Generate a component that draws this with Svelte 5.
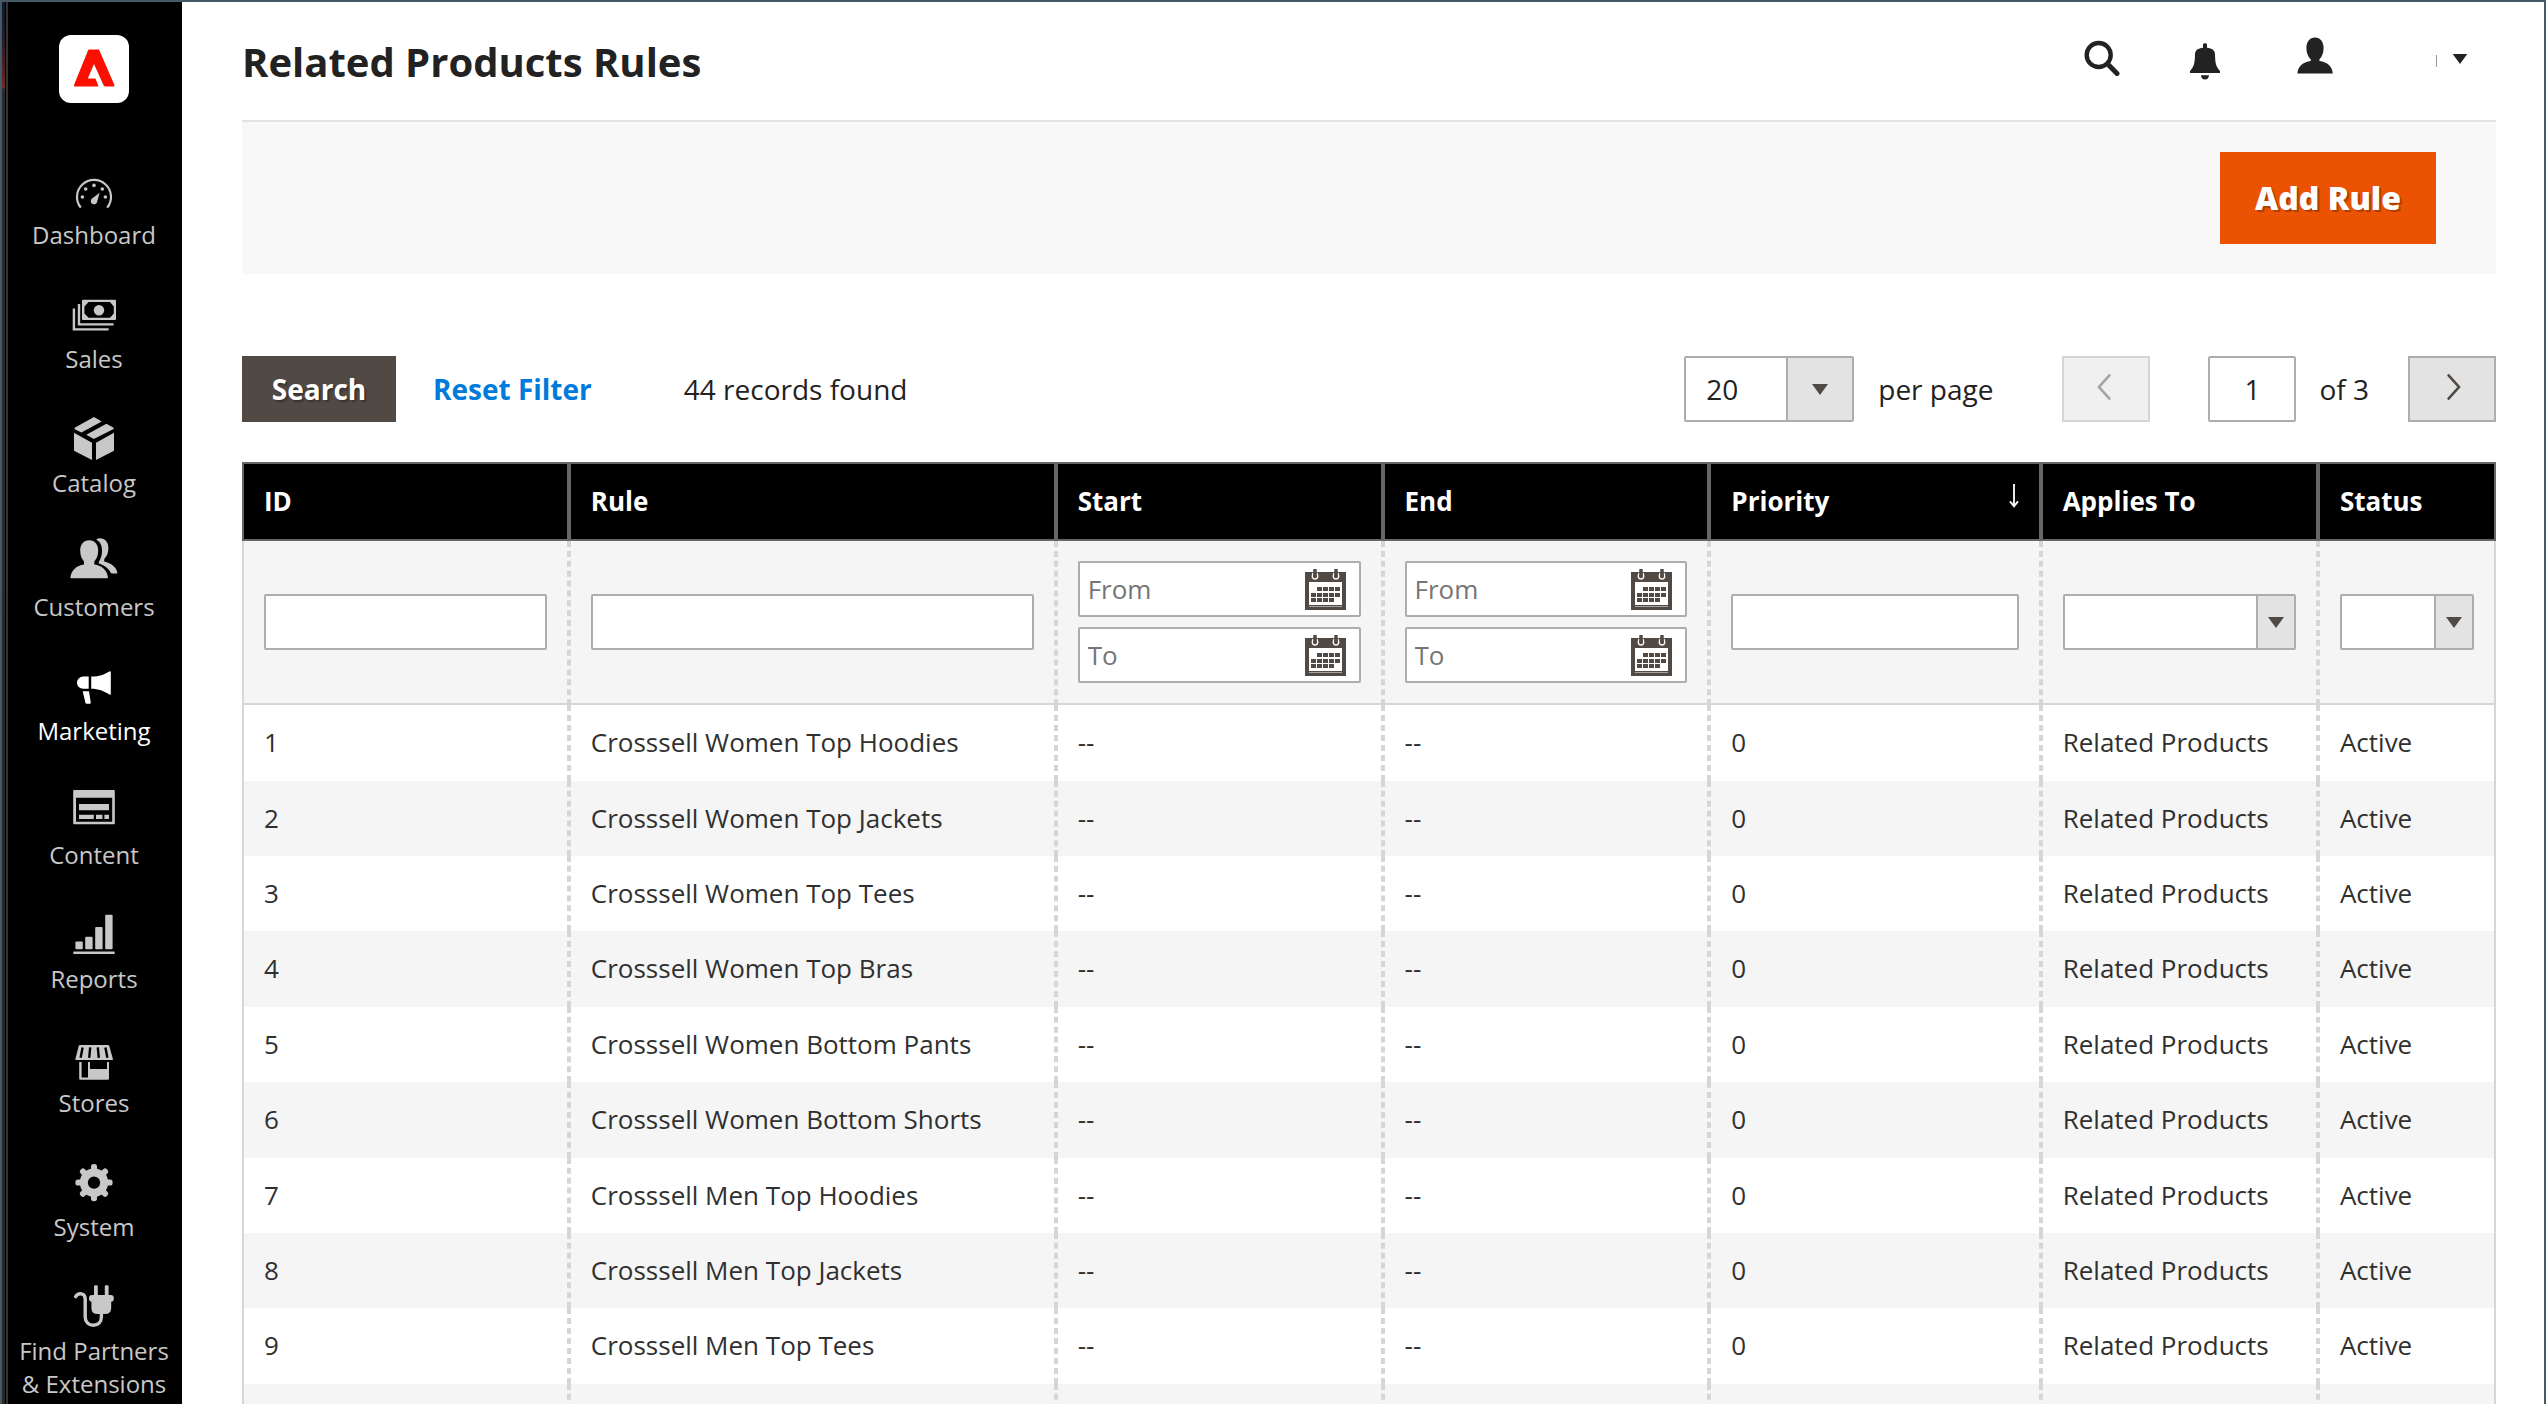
<script>
  const menu = [
    { id: 'dashboard', label: 'Dashboard' },
    { id: 'sales', label: 'Sales' },
    { id: 'catalog', label: 'Catalog' },
    { id: 'customers', label: 'Customers' },
    { id: 'marketing', label: 'Marketing', active: true },
    { id: 'content', label: 'Content' },
    { id: 'reports', label: 'Reports' },
    { id: 'stores', label: 'Stores' },
    { id: 'system', label: 'System' },
    { id: 'partners', label: 'Find Partners & Extensions' }
  ];

  const columns = [
    { id: 'id', label: 'ID', filter: 'text' },
    { id: 'rule', label: 'Rule', filter: 'text' },
    { id: 'start', label: 'Start', filter: 'date' },
    { id: 'end', label: 'End', filter: 'date' },
    { id: 'priority', label: 'Priority', filter: 'text', sorted: true },
    { id: 'applies', label: 'Applies To', filter: 'select' },
    { id: 'status', label: 'Status', filter: 'select' }
  ];

  const rules = [
    'Crosssell Women Top Hoodies',
    'Crosssell Women Top Jackets',
    'Crosssell Women Top Tees',
    'Crosssell Women Top Bras',
    'Crosssell Women Bottom Pants',
    'Crosssell Women Bottom Shorts',
    'Crosssell Men Top Hoodies',
    'Crosssell Men Top Jackets',
    'Crosssell Men Top Tees'
  ];

  const teeth = [0, 45, 90, 135, 180, 225, 270, 315];
  const calendarDays = [
    [12, 18], [18, 18], [24, 18], [30, 18],
    [6, 24], [12, 24], [18, 24], [24, 24], [30, 24],
    [6, 29], [12, 29], [18, 29], [24, 29]
  ];
</script>

{#snippet menuIcon(id)}
  <svg class="menu-icon" viewBox="0 0 60 54" fill="currentColor" aria-hidden="true">
    {#if id === 'dashboard'}
      <path d="M16.8 43.6A17 17 0 1 1 43.2 43.6" fill="none" stroke="currentColor" stroke-width="2.2" />
      <circle cx="18.4" cy="33" r="1.8" /><circle cx="21.7" cy="25" r="1.8" />
      <circle cx="30" cy="21.4" r="1.8" /><circle cx="38.3" cy="25" r="1.8" /><circle cx="41.4" cy="33" r="1.8" />
      <path d="M35.6 28.8L33 38.2A3.2 3.2 0 1 1 27.8 34.8Z" />
    {:else if id === 'sales'}
      <path fill-rule="evenodd" d="M19 11.8H51Q52 11.8 52 12.8V31Q52 32 51 32H19Q18 32 18 31V12.8Q18 11.8 19 11.8ZM24.6 14L20.4 18.6V25.6L24.6 29.8H46L49.8 25.6V18.6L46 14Z" />
      <circle cx="35" cy="22.2" r="5.2" />
      <path d="M15 16V36.4H49.6M9.9 20.4V41.4H44.6" fill="none" stroke="currentColor" stroke-width="2.4" />
    {:else if id === 'catalog'}
      <path d="M10.7 15.7L30 5L37.7 9.4L17.4 20.4L10.4 17ZM42.4 11.7L49.6 15.7V17L29.8 27L22.3 22.7ZM10 20.7L28 30.7V48L10 38.8ZM50 20.7L32 30.7V48L50 38.8Z" />
    {:else if id === 'customers'}
      <path d="M25.2 4.3C31 4.3 34.2 8.6 34.2 14.6C34.2 19.4 32.6 23.2 30.3 25.4V28.4C38 29.4 43.2 34 44 41.6Q44 42.2 43.2 42.2H7Q6.3 42.2 6.4 41.6C7.2 34 12.6 29.4 20 28.4V25.4C17.8 23.2 16.2 19.4 16.2 14.6C16.2 8.6 19.4 4.3 25.2 4.3Z" />
      <path d="M32.7 2.9C39.4 .8 44.4 5.2 44.4 12C44.4 17.4 42.6 20.8 40.2 23V25.6C47.4 27.4 52.4 31.2 53.4 36.8Q53.5 37.6 52.6 37.6H47.4C44.8 32.6 41 29.4 34.8 27.4V26C37.2 22.6 38 19 38 14.6C38 9.6 36.2 5.4 32.7 4Z" />
    {:else if id === 'marketing'}
      <path d="M19 16.6H24.7V28.8H19A6.1 6.1 0 0 1 19 16.6ZM27.2 16.6C34.6 16.8 40 14.4 45.4 11.4Q46.8 10.8 46.8 12V34Q46.8 35.2 45.4 34.6C40 31 34.6 28.8 27.2 28.8ZM18.7 31.3H25L26.8 42.8Q26.8 43.8 25.8 43.8H22.6Q21.6 43.8 21.4 42.8Z" />
    {:else if id === 'content'}
      <path fill-rule="evenodd" d="M10 6H50Q50.8 6 50.8 6.8V39.4Q50.8 40.2 50 40.2H10Q9.2 40.2 9.2 39.4V6.8Q9.2 6 10 6ZM12 13.8V37.8H48.2V13.8Z" />
      <path d="M15 20H45V26.2H15ZM15 30.8H29.8V35H15ZM32 30.8H38.4V35H32ZM40.4 30.8H45V35H40.4Z" />
    {:else if id === 'reports'}
      <rect x="11.4" y="33.6" width="7.4" height="7.6" rx="1" /><rect x="21.2" y="28.8" width="7.4" height="12.4" rx="1" />
      <rect x="31.2" y="19" width="7.4" height="22.2" rx="1" /><rect x="41.2" y="6.8" width="7.4" height="34.4" rx="1" />
      <rect x="9.2" y="43.4" width="41.6" height="2.6" rx="1" />
    {:else if id === 'stores'}
      <path d="M16 13H44Q45 13 45.2 13.8L49 27.2Q49 28 48.2 28H12Q11.2 28 11.3 27.2L14.8 13.8Q15 13 16 13Z" />
      <path d="M18.6 15.4L16.6 25.8M26.2 15.4L25.2 25.8M33.8 15.4L34.8 25.8M41.4 15.4L43.4 25.8" stroke="#000" stroke-width="2.4" fill="none" />
      <path fill-rule="evenodd" d="M15.2 30H17.6V45.6H24V30H26V37H43V30H45V46.6Q45 47.8 43.8 47.8H16.4Q15.2 47.8 15.2 46.6Z" />
    {:else if id === 'system'}
      {#each teeth as angle}
        <rect x="27" y="8" width="6" height="10" rx="2.6" transform="rotate({angle} 30 26.6)" />
      {/each}
      <circle cx="30" cy="26.6" r="10.2" fill="none" stroke="currentColor" stroke-width="8" />
    {:else}
      <rect x="30" y="5.2" width="3.8" height="13" rx="1.4" /><rect x="40.8" y="5.2" width="3.8" height="13" rx="1.4" />
      <rect x="25" y="15" width="24.8" height="6.8" rx="3" />
      <path d="M27.4 18H47.2V28Q47.2 34 41 34H33.6Q27.4 34 27.4 28Z" />
      <path d="M11.6 16.6C14.4 12.2 21.2 13 21.2 19V37C21.2 41.6 24.6 45.2 29.2 45.2C34 45.2 37.4 42 37.4 37V33" fill="none" stroke="currentColor" stroke-width="3.4" stroke-linecap="round" />
    {/if}
  </svg>
{/snippet}

{#snippet calendar()}
  <svg class="calendar-icon" viewBox="0 0 41 41" aria-hidden="true">
    <path d="M0 3H41V41H0Z" fill="#514943" />
    <path d="M4 13H37V36H4Z" fill="#fff" />
    <path d="M4 37.5H37" stroke="#a8a4a1" stroke-width="1" />
    {#each calendarDays as [x, y]}
      <rect {x} {y} width="5" height="4" fill="#514943" />
    {/each}
    <path d="M8 4Q6 10 10 10Q14 10 12 4M29 4Q27 10 31 10Q35 10 33 4" fill="none" stroke="#fff" stroke-width="1.4" />
    <path d="M10 0V7M31 0V7" stroke="#514943" stroke-width="3.4" />
  </svg>
{/snippet}

{#snippet arrowBox()}
  <span class="select-arrow" aria-hidden="true">
    <svg viewBox="0 0 16 11"><path d="M0 0H16L8 11Z" fill="#514943" /></svg>
  </span>
{/snippet}

<div class="frame">
  <div class="edge"></div>
  <aside>
    <a class="logo" href="#home" aria-label="Home">
      <svg viewBox="0 0 70 68" aria-hidden="true">
        <rect width="70" height="68" rx="12" fill="#fff" />
        <path d="M30.2 14.6H40L55.4 50Q56 51.4 54.6 51.4H46.4Q45 51.4 44.4 50L35 29L28.8 43.6H36.4L39.2 50.2Q39.6 51.4 38.4 51.4H15.6Q14.4 51.4 15 50L29 15.6Q29.4 14.6 30.2 14.6Z" fill="#fa0f00" />
      </svg>
    </a>
    <nav aria-label="Main menu">
      {#each menu as item}
        <a href="#{item.id}" class:active={item.active}>
          {@render menuIcon(item.id)}
          <span>{item.label}</span>
        </a>
      {/each}
    </nav>
  </aside>

  <main>
    <header>
      <h1>Related Products Rules</h1>
      <div class="tools">
        <button aria-label="Search">
          <svg viewBox="0 0 36 44" aria-hidden="true">
            <circle cx="14.7" cy="19" r="12" fill="none" stroke="#222" stroke-width="4.4" />
            <path d="M23.4 27.8L33 37.4" stroke="#222" stroke-width="5" stroke-linecap="round" />
          </svg>
        </button>
        <button aria-label="Notifications">
          <svg viewBox="0 0 36 44" fill="#222" aria-hidden="true">
            <path d="M16 11.8V8.6Q16 7.2 18 7.2Q20 7.2 20 8.6V11.8C25 12.4 27.8 14 28 18C28.2 26 28.6 30.4 33 35V37H3V35C7.4 30.4 7.8 26 8 18C8.2 14 11 12.4 16 11.8ZM14 39.2H22C21.8 42 20.4 43.4 18 43.4C15.6 43.4 14.2 42 14 39.2Z" />
          </svg>
        </button>
        <button class="account" aria-label="Account">
          <svg viewBox="0 0 36 44" fill="#222" aria-hidden="true">
            <path d="M18 1.6C23.4 1.6 26.6 5.8 26.6 12C26.6 16.8 25 20.8 22.4 23.4V25C30.4 26.2 35.4 30.4 35.8 37.4H.4C.8 30.4 5.8 26.2 13.8 25V23.4C11 20.8 9.4 16.8 9.4 12C9.4 5.8 12.6 1.6 18 1.6Z" />
          </svg>
          <i class="tick"></i>
          <svg class="caret" viewBox="0 0 16 11" aria-hidden="true"><path d="M0 0H16L8 11Z" fill="#222" /></svg>
        </button>
      </div>
    </header>

    <div class="actions">
      <button class="primary">Add Rule</button>
    </div>

    <div class="toolbar">
      <button class="search">Search</button>
      <button class="reset">Reset Filter</button>
      <span class="count">44 records found</span>
      <div class="pager">
        <span class="select size">
          <select id="page-size"><option>20</option></select>
          {@render arrowBox()}
        </span>
        <label for="page-size" class="per">per page</label>
        <button class="page prev" disabled aria-label="Previous page">
          <svg viewBox="0 0 14 26" aria-hidden="true"><path d="M12.4 1.4L2 13L12.4 24.6" /></svg>
        </button>
        <input id="page-number" class="number" value="1" />
        <label for="page-number" class="of">of 3</label>
        <button class="page next" aria-label="Next page">
          <svg viewBox="0 0 14 26" aria-hidden="true"><path d="M1.6 1.4L12 13L1.6 24.6" /></svg>
        </button>
      </div>
    </div>

    <table>
      <colgroup>
        {#each columns as column}<col class="col-{column.id}" />{/each}
      </colgroup>
      <thead>
        <tr>
          {#each columns as column}
            <th scope="col">
              <span class="head">
                {column.label}
                {#if column.sorted}
                  <svg viewBox="0 0 10 24" aria-hidden="true"><path d="M5 0V22M1 17.4L5 22.4L9 17.4" fill="none" stroke="#fff" stroke-width="1.8" /></svg>
                {/if}
              </span>
            </th>
          {/each}
        </tr>
        <tr class="filters">
          {#each columns as column}
            <td>
              {#if column.filter === 'text'}
                <input class="field" aria-label="{column.label} filter" />
              {:else if column.filter === 'date'}
                <div class="dates">
                  {#each ['From', 'To'] as edge}
                    <div class="date">
                      <input placeholder={edge} aria-label="{column.label} {edge}" />
                      <button aria-label="{column.label} {edge} calendar">{@render calendar()}</button>
                    </div>
                  {/each}
                </div>
              {:else}
                <span class="select">
                  <select aria-label="{column.label} filter"><option></option></select>
                  {@render arrowBox()}
                </span>
              {/if}
            </td>
          {/each}
        </tr>
      </thead>
      <tbody>
        {#each rules as rule, i}
          <tr>
            <td>{i + 1}</td>
            <td>{rule}</td>
            <td>--</td>
            <td>--</td>
            <td>0</td>
            <td>Related Products</td>
            <td>Active</td>
          </tr>
        {/each}
        <tr class="spare">
          {#each columns as column (column.id)}<td></td>{/each}
        </tr>
      </tbody>
    </table>
  </main>
</div>

<style>
  :global(body) {
    background: #fff;
    font-family: 'Open Sans', 'Noto Sans', sans-serif;
    color: #303030;
  }
  * {
    box-sizing: border-box;
  }
  button,
  input,
  select {
    margin: 0;
    padding: 0;
    font: inherit;
    color: inherit;
    background: none;
    border: 0;
    border-radius: 0;
  }
  svg {
    display: block;
    flex: none;
  }
  .frame {
    display: flex;
    height: 100vh;
    overflow: hidden;
    border: 2px solid #455a64;
    border-bottom: 0;
  }
  .edge {
    flex: none;
    width: 4px;
    background: linear-gradient(#101b2b 0, #1c1a2c 30px, #4a1c24 60px, #702a22 86px, #2a2a2a 87px, #262626 100%);
    border-right: 1px solid #000;
  }
  aside {
    flex: none;
    width: 176px;
    background: #000;
    border-left: 2px solid #333;
  }
  .logo {
    display: block;
    width: 70px;
    margin: 33px 0 43px 51px;
  }
  .logo svg {
    width: 70px;
    height: 68px;
  }
  nav a {
    display: flex;
    flex-direction: column;
    align-items: center;
    padding: 18px 8px 19px 6px;
    color: #c8c8c8;
    font-size: 24px;
    line-height: 33px;
    text-align: center;
    text-decoration: none;
  }
  nav a.active {
    color: #fff;
  }
  .menu-icon {
    width: 60px;
    height: 54px;
  }
  nav span {
    width: 152px;
  }
  main {
    flex: 1;
    min-width: 0;
    padding: 0 48px 0 60px;
  }
  header {
    display: flex;
    justify-content: space-between;
    align-items: flex-start;
    height: 120px;
    padding-top: 34px;
    border-bottom: 2px solid #e3e3e3;
  }
  h1 {
    margin: 0;
    font-size: 40px;
    font-weight: 700;
    line-height: 52px;
    color: #222;
  }
  .tools {
    display: flex;
    gap: 67px;
    padding-right: 28px;
  }
  .tools button {
    display: flex;
  }
  .tools .account {
    padding-left: 7px;
  }
  .tools svg {
    width: 36px;
    height: 44px;
  }
  .tools .tick {
    width: 1px;
    height: 12px;
    margin: 19px 15px 0 103px;
    background: #999;
  }
  .tools .caret {
    width: 16px;
    height: 10px;
    margin-top: 18px;
  }
  .actions {
    display: flex;
    justify-content: flex-end;
    padding: 30px 60px;
    background: #f8f8f8;
  }
  .primary {
    width: 216px;
    height: 92px;
    padding-bottom: 2px;
    background: #eb5202;
    color: #fff;
    font-size: 32px;
    font-weight: 800;
    text-shadow: 2px 2px 0 rgba(0, 0, 0, 0.25);
  }
  .toolbar {
    display: flex;
    align-items: center;
    height: 66px;
    margin: 82px 0 40px;
    font-size: 28px;
    color: #222;
  }
  .search {
    width: 154px;
    height: 66px;
    background: #514943;
    color: #fff;
    font-weight: 700;
    text-shadow: 2px 2px 2px rgba(0, 0, 0, 0.3);
  }
  .reset {
    margin-left: 37px;
    color: #007bdb;
    font-weight: 700;
  }
  .count {
    margin-left: 92px;
  }
  .pager {
    display: flex;
    align-items: center;
    height: 66px;
    margin-left: auto;
  }
  .select {
    position: relative;
    display: block;
    height: 56px;
  }
  .select select {
    width: 100%;
    height: 100%;
    appearance: none;
    background: #fff;
    border: 2px solid #adadad;
    border-radius: 2px;
  }
  .select-arrow {
    position: absolute;
    top: 2px;
    right: 2px;
    bottom: 2px;
    display: flex;
    align-items: center;
    justify-content: center;
    width: 38px;
    background: #e3e3e3;
    border-left: 2px solid #adadad;
    pointer-events: none;
  }
  .select-arrow svg {
    width: 16px;
    height: 11px;
  }
  .size {
    width: 170px;
    height: 66px;
    margin-right: 24px;
  }
  .size select {
    padding-left: 20px;
  }
  .size :global(.select-arrow) {
    width: 66px;
  }
  .per {
    margin-right: 69px;
  }
  .page {
    display: flex;
    align-items: center;
    justify-content: center;
    width: 88px;
    height: 66px;
    padding-bottom: 4px;
    background: #e3e3e3;
    border: 2px solid #adadad;
  }
  .page:disabled {
    opacity: 0.5;
  }
  .prev {
    padding-right: 4px;
  }
  .next {
    padding-left: 4px;
  }
  .page svg {
    width: 14px;
    height: 26px;
    fill: none;
    stroke: #514943;
    stroke-width: 2.6;
    stroke-linecap: round;
  }
  .number {
    width: 88px;
    height: 66px;
    margin-left: 58px;
    background: #fff;
    border: 2px solid #adadad;
    border-radius: 2px;
    text-align: center;
  }
  .of {
    margin: 0 39px 0 23px;
  }
  table {
    width: 100%;
    table-layout: fixed;
    border-collapse: separate;
    border-spacing: 0;
    font-size: 26px;
    line-height: 1.36;
  }
  .col-id,
  .col-start,
  .col-end {
    width: 14.5%;
  }
  .col-rule {
    width: 21.6%;
  }
  .col-priority {
    width: 14.7%;
  }
  .col-applies {
    width: 12.3%;
  }
  .col-status {
    width: 7.9%;
  }
  th {
    padding: 20px;
    background: #000;
    border: 2px solid #666;
    color: #fff;
    font-weight: 700;
    text-align: left;
  }
  .head {
    display: flex;
    justify-content: space-between;
  }
  .head svg {
    width: 10px;
    height: 24px;
  }
  td {
    padding: 20px;
    border-left: 2px dashed #d6d6d6;
    border-right: 2px dashed #d6d6d6;
  }
  td:first-child {
    border-left-style: solid;
  }
  td:last-child {
    border-right-style: solid;
  }
  .filters td {
    background: #f5f5f5;
    border-bottom: 2px solid #d6d6d6;
  }
  tbody tr:nth-child(even) td {
    background: #f5f5f5;
  }
  .spare {
    height: 75px;
  }
  .field,
  .date {
    width: 100%;
    height: 56px;
    background: #fff;
    border: 2px solid #adadad;
    border-radius: 2px;
  }
  .field {
    display: block;
    padding: 0 8px;
  }
  .dates {
    display: grid;
    grid-template-columns: minmax(0, 1fr);
    gap: 10px;
  }
  .date {
    display: flex;
    align-items: center;
    padding: 0 13px 0 8px;
  }
  .date input {
    flex: 1;
    width: 0;
    min-width: 0;
  }
  .date input::placeholder {
    color: #757575;
    opacity: 1;
  }
  .calendar-icon {
    width: 41px;
    height: 41px;
  }
</style>
